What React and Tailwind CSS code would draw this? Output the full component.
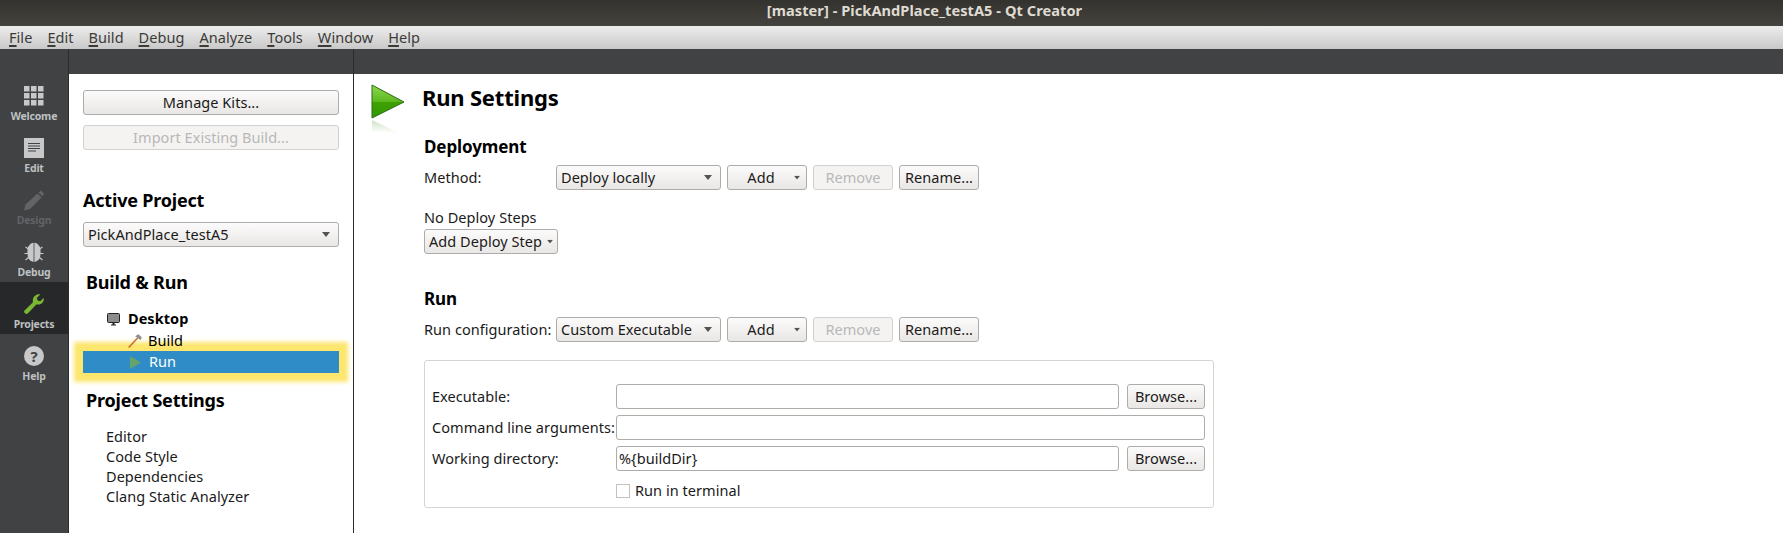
import { Fragment } from "react";

const menus = ["File", "Edit", "Build", "Debug", "Analyze", "Tools", "Window", "Help"];

function Caret({ className = "" }) {
  return (
    <svg width="8" height="5" viewBox="0 0 8 5" className={className}>
      <path d="M0 0H8L4 5Z" fill="#55534f" />
    </svg>
  );
}

function WelcomeIcon() {
  const cells = [0, 7, 14];
  return (
    <svg width="20" height="20" viewBox="0 0 20 20">
      {cells.map((y) =>
        cells.map((x) => <rect key={`${x}-${y}`} x={x} y={y} width="5.5" height="5.5" fill="#c8c8c9" />)
      )}
    </svg>
  );
}

function EditIcon() {
  return (
    <svg width="20" height="20" viewBox="0 0 20 20">
      <rect width="20" height="20" fill="#c8c8c9" />
      <path d="M4 5.5H16M4 8H16M4 10.5H16M4 13H12" stroke="#404244" strokeWidth="1" />
    </svg>
  );
}

function DesignIcon() {
  return (
    <svg width="20" height="21" viewBox="0 0 20 21">
      <path d="M0 20.5L1.5 14.5L13.5 3.5L17.5 7.5L6 19Z" fill="#626466" />
      <path d="M14.5 2.5L17 0.5L20 3.5L18.5 6.5Z" fill="#626466" />
    </svg>
  );
}

function DebugIcon() {
  return (
    <svg width="20" height="21" viewBox="0 0 20 21">
      <path d="M1.5 5L4.5 7M18.5 5L15.5 7M0.5 11.5H4M19.5 11.5H16M1.5 18L4.5 15.5M18.5 18L15.5 15.5" stroke="#c8c8c9" strokeWidth="1.1" />
      <path d="M9.6 0.8C7.6 1 6.2 2 5.4 3.2C4.4 4 3.8 5 3.6 6.4C3.2 9 3.4 14 4.4 16.5C5.5 18.5 7.5 19.6 9.6 20Z" fill="#c8c8c9" />
      <path d="M10.4 0.8C12.4 1 13.8 2 14.6 3.2C15.6 4 16.2 5 16.4 6.4C16.8 9 16.6 14 15.6 16.5C14.5 18.5 12.5 19.6 10.4 20Z" fill="#c8c8c9" />
    </svg>
  );
}

function WrenchIcon() {
  return (
    <svg width="20" height="20" viewBox="0 0 20 20">
      <path
        d="M0.5 16.5L9 8.2C8.2 5.2 9.5 1.8 12.6 0.7C14 0.2 15.2 0.2 16.2 0.5L12.8 3.9L13.6 6.6L16.2 7.3L19.6 3.9C20.1 5.8 19.6 7.6 18.2 9C16.3 10.6 14.4 10.9 12.3 10.4L4 19.2C3 20.1 2 20.1 1 19.3C0 18.4 -0.2 17.3 0.5 16.5Z"
        fill="#7ab834"
      />
    </svg>
  );
}

function NavItem({ label, icon, active, dim }) {
  return (
    <div className={`h-[52px] flex flex-col items-center ${active ? "bg-[#27282a]" : ""}`}>
      <div className="h-[20px] mt-[12px] flex items-center justify-center">{icon}</div>
      <span className={`mt-[3px] text-[10.5px] tracking-[-0.2px] leading-[15px] font-bold ${dim ? "text-[#626466]" : "text-[#bfc0c1]"}`}>{label}</span>
    </div>
  );
}

function Button({ children, disabled, className = "" }) {
  return (
    <button
      className={`h-[25px] shrink-0 flex items-center justify-center rounded-[3px] border text-[14.5px] ${
        disabled
          ? "border-[#d3d1cf] bg-[#f4f3f2] text-[#b8b8b8]"
          : "border-[#aeaca9] bg-gradient-to-b from-[#fcfbfb] to-[#e9e7e5] text-[#1a1a1a]"
      } ${className}`}
    >
      {children}
    </button>
  );
}

function Combo({ label, className = "" }) {
  return (
    <div className={`h-[25px] shrink-0 flex items-center justify-between pl-[4px] pr-[8px] rounded-[3px] border border-[#aeaca9] bg-gradient-to-b from-[#fcfbfb] to-[#e9e7e5] text-[14.5px] text-[#1a1a1a] ${className}`}>
      <span>{label}</span>
      <Caret />
    </div>
  );
}

function ActionRow() {
  return (
    <Fragment>
      <Button className="w-[80px] ml-[6px] relative">
        <span className="mr-[12px]">Add</span>
        <Caret className="absolute right-[5px] top-[9px] scale-75" />
      </Button>
      <Button disabled className="w-[80px] ml-[6px]">Remove</Button>
      <Button className="w-[80px] ml-[6px]">Rename...</Button>
    </Fragment>
  );
}

function Field({ value, className = "" }) {
  return (
    <div className={`h-[25px] flex items-center px-[2px] rounded-[3px] border border-[#aeaca9] bg-white text-[14.5px] text-[#1a1a1a] ${className}`}>
      {value}
    </div>
  );
}

function FormRow({ label, children }) {
  return (
    <div className="h-[25px] mb-[6px] flex items-center">
      <span className="w-[184px] shrink-0 whitespace-nowrap">{label}</span>
      {children}
    </div>
  );
}

export default function App() {
  return (
    <div className="w-[1783px] h-[533px] overflow-hidden flex flex-col bg-white text-[14.5px] tracking-[0.05px] text-[#1a1a1a] font-['Noto_Sans',sans-serif]">
      <div className="h-[26px] shrink-0 bg-gradient-to-b from-[#33322e] to-[#45433e] flex items-center justify-center text-[14.6px] font-bold text-[#dfdbd2] pb-[4px] pl-[66px]">
        [master] - PickAndPlace_testA5 - Qt Creator
      </div>
      <div className="h-[23px] shrink-0 bg-gradient-to-b from-[#ededed] to-[#c9c9c9] flex items-center pl-[9px] gap-[15px] text-[14.5px] text-[#3c3b37]">
        {menus.map((m) => (
          <span key={m}>
            <u className="decoration-2 underline-offset-2">{m[0]}</u>
            {m.slice(1)}
          </span>
        ))}
      </div>
      <div className="h-[25px] shrink-0 bg-[#404244] flex">
        <div className="w-[69px] border-r border-[#2b2c2e]" />
        <div className="w-[285px] border-r border-[#2b2c2e]" />
      </div>
      <div className="flex-1 flex min-h-0">
        <div className="w-[69px] shrink-0 bg-[#404244] border-r border-[#2b2c2e]">
          <NavItem label="Welcome" icon={<WelcomeIcon />} />
          <NavItem label="Edit" icon={<EditIcon />} />
          <NavItem label="Design" icon={<DesignIcon />} dim />
          <NavItem label="Debug" icon={<DebugIcon />} />
          <NavItem label="Projects" icon={<WrenchIcon />} active />
          <NavItem
            label="Help"
            icon={
              <div className="w-[20px] h-[20px] rounded-full bg-[#c8c8c9] flex items-center justify-center text-[15px] font-bold text-[#404244]">?</div>
            }
          />
        </div>
        <div className="w-[285px] shrink-0 border-r border-[#2b2c2e] px-[14px] pt-[16px]">
          <Button className="w-full">Manage Kits...</Button>
          <Button disabled className="w-full mt-[10px]">Import Existing Build...</Button>
          <h2 className="mt-[38px] h-[24px] leading-[24px] text-[18px] tracking-[-0.2px] font-bold text-black">Active Project</h2>
          <Combo label="PickAndPlace_testA5" className="w-full mt-[10px]" />
          <h2 className="mt-[23px] ml-[3px] h-[24px] leading-[24px] text-[18px] tracking-[-0.2px] font-bold text-black">Build &amp; Run</h2>
          <div className="mt-[14px] h-[22px] flex items-center pl-[24px] font-bold text-[14.5px] text-black">
            <svg width="13" height="13" viewBox="0 0 13 13" className="mr-[8px]">
              <rect x="0.5" y="0.5" width="12" height="9" rx="1" fill="#8c8c8c" stroke="#222" />
              <path d="M4 12.5H9V11.5H7.5V10H5.5V11.5H4Z" fill="#222" />
            </svg>
            Desktop
          </div>
          <div className="h-[21px] flex items-center pl-[45px] text-black">
            <svg width="14" height="14" viewBox="0 0 14 14" className="mr-[6px]">
              <path d="M0.7 13.5L10 3.5" stroke="#c87b35" strokeWidth="1.8" />
              <path d="M7 2.2L10.5 0.3L13.8 3.6L12.3 6.2L10 3.7Z" fill="#8d8d8d" />
            </svg>
            Build
          </div>
          <div className="h-[22px] bg-[#308cc6] shadow-[0_0_4px_9px_#fde66e] flex items-center pl-[47px] text-white">
            <svg width="11" height="13" viewBox="0 0 11 13" className="mr-[8px]">
              <path d="M0 0L11 6.5L0 13Z" fill="#64a36a" />
            </svg>
            Run
          </div>
          <h2 className="mt-[15px] ml-[3px] h-[24px] leading-[24px] text-[18px] tracking-[-0.2px] font-bold text-black">Project Settings</h2>
          <div className="mt-[14px] ml-[23px] flex flex-col">
            {["Editor", "Code Style", "Dependencies", "Clang Static Analyzer"].map((s) => (
              <span key={s} className="h-[20px] leading-[20px]">{s}</span>
            ))}
          </div>
        </div>
        <div className="flex-1 min-w-0">
          <div className="flex pl-[17px] pt-[10px]">
            <svg width="36" height="49" viewBox="0 0 36 49" className="shrink-0">
              <defs>
                <linearGradient id="playFill" x1="0" y1="0" x2="0" y2="1">
                  <stop offset="0" stopColor="#8fd94e" />
                  <stop offset="0.5" stopColor="#5cb820" />
                  <stop offset="0.52" stopColor="#3fa000" />
                  <stop offset="1" stopColor="#2f9a05" />
                </linearGradient>
                <linearGradient id="playGlow" x1="0" y1="0" x2="0" y2="1">
                  <stop offset="0" stopColor="#cfe3c4" />
                  <stop offset="1" stopColor="#ffffff" />
                </linearGradient>
              </defs>
              <path d="M1 1L33 18L1 34Z" fill="url(#playFill)" stroke="#2c6b12" strokeWidth="1" />
              <path d="M1 36L28 49H1Z" fill="url(#playGlow)" />
            </svg>
            <h1 className="ml-[15px] -mt-[1px] h-[28px] leading-[28px] text-[22px] tracking-[-0.2px] font-bold text-black">Run Settings</h1>
          </div>
          <div className="ml-[70px] mt-[2px]">
            <h3 className="h-[24px] leading-[24px] text-[17px] tracking-[-0.1px] font-bold text-black">Deployment</h3>
            <div className="mt-[6px] flex items-center">
              <span className="w-[132px] shrink-0">Method:</span>
              <Combo label="Deploy locally" className="w-[165px]" />
              <ActionRow />
            </div>
            <p className="mt-[17px] h-[20px] leading-[20px]">No Deploy Steps</p>
            <Button className="w-[134px] mt-[2px] justify-start pl-[4px] gap-[4px]">
              Add Deploy Step
              <Caret className="scale-75" />
            </Button>
            <h3 className="mt-[33px] h-[24px] leading-[24px] text-[17px] tracking-[-0.1px] font-bold text-black">Run</h3>
            <div className="mt-[6px] flex items-center">
              <span className="w-[132px] shrink-0 whitespace-nowrap">Run configuration:</span>
              <Combo label="Custom Executable" className="w-[165px]" />
              <ActionRow />
            </div>
            <div className="mt-[18px] w-[790px] h-[148px] rounded-[3px] border border-[#d6d5d3] pt-[23px] pl-[7px] pr-[8px]">
              <FormRow label="Executable:">
                <Field className="w-[503px]" />
                <Button className="w-[78px] ml-[8px]">Browse...</Button>
              </FormRow>
              <FormRow label="Command line arguments:">
                <Field className="flex-1" />
              </FormRow>
              <FormRow label="Working directory:">
                <Field value="%{buildDir}" className="w-[503px]" />
                <Button className="w-[78px] ml-[8px]">Browse...</Button>
              </FormRow>
              <div className="flex items-center ml-[184px] mt-[9px]">
                <span className="w-[14px] h-[14px] border border-[#c4c2c0] bg-white mr-[5px]" />
                Run in terminal
              </div>
            </div>
          </div>
        </div>
      </div>
    </div>
  );
}
